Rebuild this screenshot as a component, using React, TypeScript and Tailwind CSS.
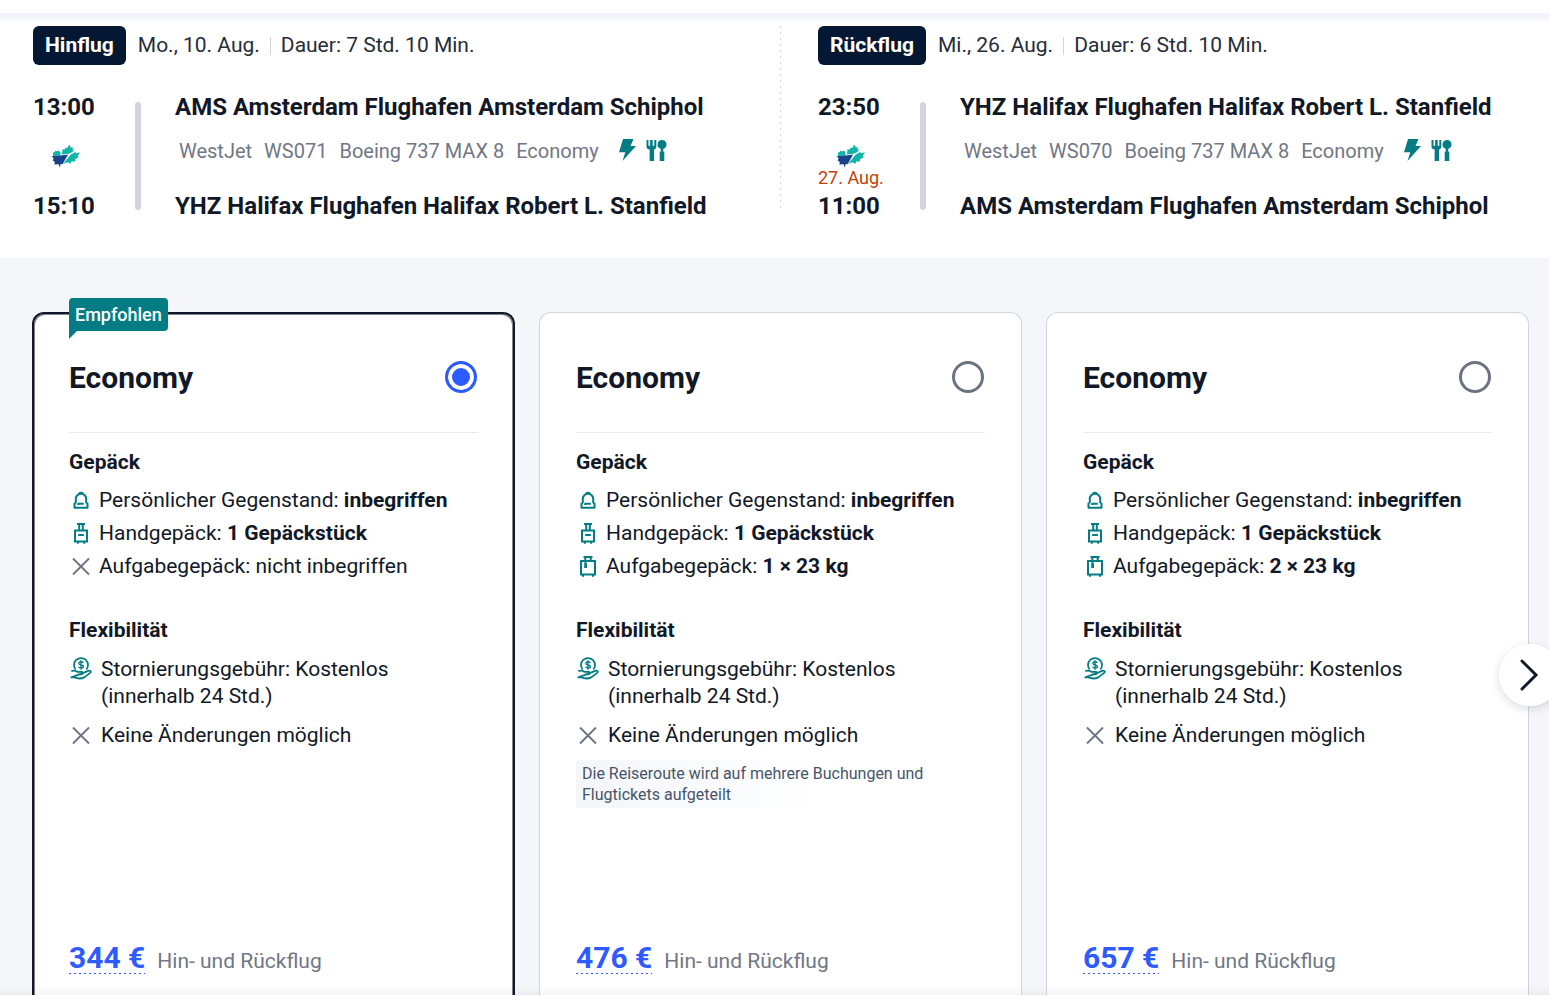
import React, { useState } from 'react';

interface Flight {
  direction: string;
  date: string;
  duration: string;
  departure: string;
  arrival: string;
  arrivalDate?: string;
  from: string;
  to: string;
  flightNumber: string;
}

interface Fare {
  id: string;
  name: string;
  checkedBag: string | null;
  note?: string;
  price: string;
  recommended?: boolean;
}

const flights: Flight[] = [
  {
    direction: 'Hinflug',
    date: 'Mo., 10. Aug.',
    duration: 'Dauer: 7 Std. 10 Min.',
    departure: '13:00',
    arrival: '15:10',
    from: 'AMS Amsterdam Flughafen Amsterdam Schiphol',
    to: 'YHZ Halifax Flughafen Halifax Robert L. Stanfield',
    flightNumber: 'WS071'
  },
  {
    direction: 'Rückflug',
    date: 'Mi., 26. Aug.',
    duration: 'Dauer: 6 Std. 10 Min.',
    departure: '23:50',
    arrival: '11:00',
    arrivalDate: '27. Aug.',
    from: 'YHZ Halifax Flughafen Halifax Robert L. Stanfield',
    to: 'AMS Amsterdam Flughafen Amsterdam Schiphol',
    flightNumber: 'WS070'
  }
];

const fares: Fare[] = [
  { id: 'fare-1', name: 'Economy', checkedBag: null, price: '344 €', recommended: true },
  {
    id: 'fare-2',
    name: 'Economy',
    checkedBag: '1 × 23 kg',
    note: 'Die Reiseroute wird auf mehrere Buchungen und Flugtickets aufgeteilt',
    price: '476 €'
  },
  { id: 'fare-3', name: 'Economy', checkedBag: '2 × 23 kg', price: '657 €' }
];

function AirlineLogo() {
  return (
    <svg viewBox="0 0 30 24" className="w-[30px] h-6" aria-hidden="true">
      <path
        fill="#0fb5a6"
        d="M3 12V8.500L5 8l.3-1.600 2 .8L9 6.600l1.500 1.900v3zM12 10.500 12.500 5l2 .8 1.200-2.400 1.200.8L19.500.5l1.200 3 2-.6-.2 2.600 1.500-.3-1.500 2.800L18 9.900zM20.500 10.700l3-1.700 2-1 .6 1.300 3.900-1-2.300 3.800.8 1.300-3.200 1.600-.5 2.400-3.400.2-1 2.200-3-1.500-4.400 1.700z"
      />
      <path fill="#16438c" d="M1.500 12.200 18 10.800 12.500 20.300 10.500 20 10 23.800 8.600 20.300 4.400 20.600 4.800 18 2.700 16.500 3.700 14.300z" />
    </svg>
  );
}

function PowerIcon() {
  return (
    <svg viewBox="0 0 24 24" className="w-6 h-6 text-[#047c84]" fill="currentColor" aria-hidden="true">
      <path d="M8 0h10.500l-3 7H21L7.500 22l2.800-8.800H4z" />
    </svg>
  );
}

function MealIcon() {
  return (
    <svg viewBox="0 0 24 24" className="w-6 h-6 text-[#047c84]" fill="currentColor" aria-hidden="true">
      <path d="M1.500 1h2v5.800h1.600V1h2.600v5.800h1.600V1h2v6.800c0 1.400-.9 2.500-2.300 2.800v2.200h.1V22H4.600v-9.200h.1v-2.200C2.600 10.300 1.500 9.200 1.500 7.800z" />
      <path d="M17 1a4.500 4.500 0 0 1 1.300 8.800v3h1V22h-4.600v-9.200h1v-3A4.500 4.500 0 0 1 17 1z" />
    </svg>
  );
}

function BackpackIcon() {
  return (
    <svg viewBox="0 0 24 24" className="w-6 h-6 shrink-0 text-[#047c84]" fill="none" stroke="currentColor" strokeWidth="2" strokeLinejoin="round" aria-hidden="true">
      <path d="M6.800 13.500V10a5.200 5.200 0 0 1 10.400 0v3.500l1.300 1v4.200h-13v-4.200zM10 5.200c0-2 4-2 4 0M9.200 16v-1.300h5.600" />
    </svg>
  );
}

function CabinBagIcon() {
  return (
    <svg viewBox="0 0 24 24" className="w-6 h-6 shrink-0 text-[#047c84]" fill="none" stroke="currentColor" strokeWidth="2" aria-hidden="true">
      <path d="M8 2h8M10.200 2v6M13.800 2v6M6 8.500h12V19.500H6zM9.200 13h5.600M8.800 19.300v2.500M15.200 19.300v2.500" />
    </svg>
  );
}

function SuitcaseIcon() {
  return (
    <svg viewBox="0 0 24 24" className="w-6 h-6 shrink-0 text-[#047c84]" fill="none" stroke="currentColor" strokeWidth="2" aria-hidden="true">
      <path d="M7.500 2h9M9.300 2v4M14.700 2v4M5 6h14v13.500H5zM7 19.300v2.500M17 19.300v2.500M9.500 6v3.500" />
      <path d="M8.200 8.500h2.800v4.500H8.200z" fill="currentColor" stroke="none" />
    </svg>
  );
}

function RefundIcon() {
  return (
    <svg viewBox="0 0 24 24" className="w-6 h-6 shrink-0 text-[#047c84]" fill="none" stroke="currentColor" strokeWidth="1.8" strokeLinejoin="round" aria-hidden="true">
      <path d="M6.600 13.500a7 7 0 1 1 10.800 0" />
      <path d="M14.300 6.800c-.7-1.500-4.500-1.500-4.500.6s4.600 1 4.600 3.100-4 2-4.800.3M12 4.200v9.600" strokeWidth="1.4" />
      <path d="M2.300 15.200c2-.8 4-.8 6 .6h4.600c1.500.6 1 2.600-.6 2.600H9M13.800 17.200l5.400-2.300c2.200-.7 3.300.7 1.900 2l-5.500 4.200c-2.800 1.600-7.300 1.500-10.300.3h-3z" />
    </svg>
  );
}

function CrossIcon() {
  return (
    <svg viewBox="0 0 24 24" className="w-6 h-6 shrink-0 text-[#6b7280]" fill="none" stroke="currentColor" strokeWidth="1.8" aria-hidden="true">
      <path d="M4 3.500l16 16M20 3.500l-16 16" />
    </svg>
  );
}

function FlightSummary({ flight }: { flight: Flight }) {
  return (
    <section>
      <div className="flex items-center h-[39px] text-[21px] text-[#252d3a]">
        <span className="flex items-center h-full px-3 rounded-md bg-[#041833] text-white font-bold">{flight.direction}</span>
        <span className="ml-3">{flight.date}</span>
        <span className="w-px h-[18px] mx-2.5 bg-[#d1d5db]" />
        <span>{flight.duration}</span>
      </div>

      <div className="flex mt-[29px] text-[24px] font-bold">
        <div className="flex flex-col w-16 whitespace-nowrap">
          <time>{flight.departure}</time>
          <span className="flex justify-center mt-[23px]">
            <AirlineLogo />
          </span>
          <span className="h-[25px] text-[18px] leading-5 font-normal text-[#c2410c]">{flight.arrivalDate}</span>
          <time>{flight.arrival}</time>
        </div>
        <span className="w-1.5 mt-2 mb-2.5 ml-[38px] mr-[34px] rounded-full bg-[#d1d5db]" />
        <div>
          <p>{flight.from}</p>
          <p className="flex items-center gap-3 mt-[18px] mb-[30px] pl-1 text-[20px] leading-6 font-normal text-[#717785]">
            <span>WestJet</span>
            <span>{flight.flightNumber}</span>
            <span>Boeing 737 MAX 8</span>
            <span>Economy</span>
            <span className="flex gap-1.5 ml-1">
              <PowerIcon />
              <MealIcon />
            </span>
          </p>
          <p>{flight.to}</p>
        </div>
      </div>
    </section>
  );
}

interface FareCardProps {
  fare: Fare;
  selected: boolean;
  onSelect: () => void;
}

function FareCard({ fare, selected, onSelect }: FareCardProps) {
  return (
    <article
      className={`relative flex flex-col rounded-t-xl bg-white ${
        selected
          ? 'border-2 border-b-0 border-[#111827] px-[35px] pt-[47px] shadow-[inset_1px_1px_0_#7d828c,inset_-1px_1px_0_#7d828c]'
          : 'border border-b-0 border-[#d1d5db] px-9 pt-12'
      }`}
    >
      {fare.recommended && (
        <div className="absolute left-[35px] -top-4">
          <span className="block rounded-t-sm rounded-br-sm bg-[#047c84] px-1.5 text-[18px] leading-[33px] font-medium text-white">
            Empfohlen
          </span>
          <span className="block w-2 h-2 bg-[#047c84] [clip-path:polygon(0_0,100%_0,0_100%)]" />
        </div>
      )}

      <label className="flex items-center justify-between h-8 pr-px text-[30px] font-bold">
        {fare.name}
        <input
          type="radio"
          name="fare"
          checked={selected}
          onChange={onSelect}
          className="appearance-none w-8 h-8 rounded-full border-[3px] border-[#6b7280] bg-white checked:border-[#2d5bff] checked:bg-[#2d5bff] checked:shadow-[inset_0_0_0_4px_#fff]"
        />
      </label>

      <hr className="mt-[39px] border-[#e9eaed]" />

      <h3 className="mt-4 font-bold">Gepäck</h3>
      <ul className="mt-2">
        <li className="flex items-center gap-1.5 h-[33px]">
          <BackpackIcon />
          <span>Persönlicher Gegenstand: <b>inbegriffen</b></span>
        </li>
        <li className="flex items-center gap-1.5 h-[33px]">
          <CabinBagIcon />
          <span>Handgepäck: <b>1 Gepäckstück</b></span>
        </li>
        <li className="flex items-center gap-1.5 h-[33px]">
          {fare.checkedBag ? <SuitcaseIcon /> : <CrossIcon />}
          <span>Aufgabegepäck: {fare.checkedBag ? <b>{fare.checkedBag}</b> : 'nicht inbegriffen'}</span>
        </li>
      </ul>

      <h3 className="mt-[34px] font-bold">Flexibilität</h3>
      <ul className="mt-3 space-y-3">
        <li className="flex items-start gap-2">
          <RefundIcon />
          <span>Stornierungsgebühr: Kostenlos<br />(innerhalb 24 Std.)</span>
        </li>
        <li className="flex items-center gap-2">
          <CrossIcon />
          <span>Keine Änderungen möglich</span>
        </li>
      </ul>

      {fare.note && (
        <p className="mt-[11px] rounded-sm bg-linear-to-r from-[#f4f6fa] to-white to-60% py-[3px] pl-1.5 pr-8 text-[16px] leading-[21px] text-[#475569]">
          {fare.note}
        </p>
      )}

      <div className="flex items-baseline gap-3 mt-auto pt-8 pb-5 text-[#717785]">
        <button
          type="button"
          className="pb-0.5 text-[30px] leading-[29px] font-bold text-[#2d5bff] bg-[repeating-linear-gradient(to_right,#2d5bff_0_2px,transparent_2px_5px)] bg-[length:100%_1px] bg-bottom bg-no-repeat"
        >
          {fare.price}
        </button>
        <span>Hin- und Rückflug</span>
      </div>
    </article>
  );
}

function App() {
  const [selectedFare, setSelectedFare] = useState('fare-1');

  return (
    <div className="flex flex-col min-h-screen overflow-x-hidden bg-white font-[Roboto,'Noto_Sans',sans-serif] text-[21px] leading-[27px] text-[#111827]">
      <div className="h-2.5 mt-[13px] bg-linear-to-b from-[#f3f4f9] from-40% to-white" />

      <header className="grid grid-cols-[781fr_768fr] pt-[3px] pb-[38px]">
        <div className="flex justify-between pl-[33px]">
          <FlightSummary flight={flights[0]} />
          <span className="w-px mb-2.5 bg-[repeating-linear-gradient(to_bottom,#d1d5db_0_2px,transparent_2px_6px)]" />
        </div>
        <div className="pl-[37px]">
          <FlightSummary flight={flights[1]} />
        </div>
      </header>

      <main className="relative flex flex-1 bg-[#f4f6fa] pt-[54px] pl-8 pr-5">
        <div className="grid flex-1 grid-cols-3 gap-6">
          {fares.map(fare => (
            <FareCard
              key={fare.id}
              fare={fare}
              selected={fare.id === selectedFare}
              onSelect={() => setSelectedFare(fare.id)}
            />
          ))}
        </div>
        <button
          type="button"
          aria-label="Weitere Tarife"
          className="absolute -right-3 top-[386px] flex items-center justify-center w-[62px] h-[62px] rounded-full bg-white shadow-[0_3px_10px_rgba(17,24,39,0.14)]"
        >
          <svg viewBox="0 0 24 36" className="w-6 h-9" fill="none" stroke="#111827" strokeWidth="3" strokeLinecap="round" aria-hidden="true">
            <path d="M4 4l14 14L4 32" />
          </svg>
        </button>
        <div className="absolute inset-x-0 bottom-0 h-2.5 bg-linear-to-b from-transparent to-black/4" />
      </main>

      <footer className="h-[11px]" />
    </div>
  );
}

export default App;
